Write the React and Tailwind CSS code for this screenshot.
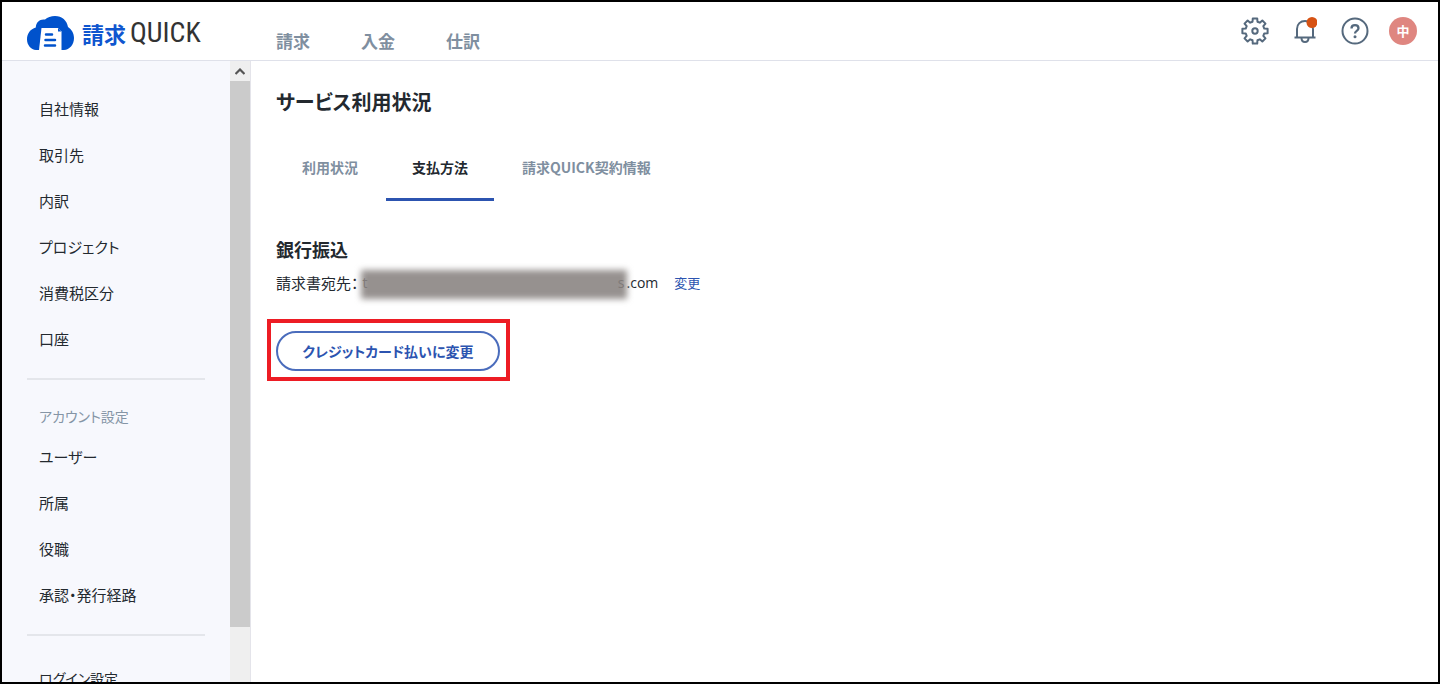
import React from 'react';

const mainNav = ['請求', '入金', '仕訳'];

const companyLinks = ['自社情報', '取引先', '内訳', 'プロジェクト', '消費税区分', '口座'];
const accountLinks = ['ユーザー', '所属', '役職', '承認・発行経路'];

const tabs = [
  { label: '利用状況', active: false },
  { label: '支払方法', active: true },
  { label: '請求QUICK契約情報', active: false },
];

// Outline of the cog: eight teeth, four points each
const cogPoints = Array.from({ length: 8 }, (_, i) =>
  [
    [-15, 9.6],
    [-10, 12.8],
    [10, 12.8],
    [15, 9.6],
  ]
    .map(([offset, radius]) => {
      const angle = ((i * 45 + offset) * Math.PI) / 180;
      return `${(14 + radius * Math.sin(angle)).toFixed(2)},${(14 - radius * Math.cos(angle)).toFixed(2)}`;
    })
    .join(' ')
).join(' ');

const Logo = () => (
  <a href="#" className="flex items-center gap-2 w-[249px] pl-[25px] pt-1 shrink-0">
    <svg width="47" height="34" viewBox="0 0 47 34" aria-hidden="true">
      <path
        d="M12 34H9C4 33.500 0 29 0 23.500C0 17.500 3.500 13 8.800 11.500C9 6 13 2.800 18 3.600C20.500 1.200 24 0 28 0C35 0 40 4.500 41 11C44.500 13.200 47 17 47 22C47 29 42.500 33.500 37 34Z"
        fill="#0052cc"
      />
      <path d="M14.500 12H31L34.500 15.500V34H12Z" fill="#fff" />
      <path d="M31 12V15.500H34.500" fill="#0052cc" />
      <path d="M19 18.500H25M18.500 24H28M18 29.500H28" stroke="#0052cc" strokeWidth="2.500" strokeLinecap="round" />
    </svg>
    <span className="flex items-center gap-1 leading-8">
      <span className="text-[22px] font-bold text-[#0f56cf]">請求</span>
      <span className="text-[28px] text-[#333] font-['Liberation_Sans_Narrow','Roboto_Condensed','Noto_Sans_CJK_JP',sans-serif]">QUICK</span>
    </span>
  </a>
);

const GearIcon = () => (
  <svg width="28" height="28" viewBox="0 0 28 28" fill="none" stroke="#55697d" strokeWidth="2" strokeLinejoin="round" aria-hidden="true">
    <polygon points={cogPoints} />
    <circle cx="14" cy="14" r="2.700" />
  </svg>
);

const BellIcon = () => (
  <svg width="24" height="28" viewBox="0 0 24 28" fill="none" stroke="#55697d" strokeWidth="2" aria-hidden="true">
    <path d="M4 20.500V12C4 7 7.500 4 12 4C16.500 4 20 7 20 12V20.500M1.500 20.500H22.500" />
    <path d="M8.500 21C8.500 23.500 10 25 12 25C14 25 15.500 23.500 15.500 21" />
    <circle cx="19" cy="5.500" r="5.500" fill="#d65213" stroke="none" />
  </svg>
);

const HelpIcon = () => (
  <svg width="28" height="28" viewBox="0 0 28 28" fill="none" stroke="#55697d" strokeWidth="2" aria-hidden="true">
    <circle cx="14" cy="14" r="12.500" />
    <path d="M10.500 11.500C10.500 9.300 12 8.200 14 8.200C16 8.200 17.500 9.400 17.500 11.300C17.500 14 14 13.800 14 16.500" strokeWidth="2.300" />
    <circle cx="14" cy="19.800" r="1.500" fill="#55697d" stroke="none" />
  </svg>
);

const SideLinks = ({ items }) => (
  <ul>
    {items.map((item) => (
      <li key={item}>
        <a href="#" className="block h-[46px] pl-[37px] leading-[46px]">
          {item}
        </a>
      </li>
    ))}
  </ul>
);

const Sidebar = () => (
  <aside className="flex w-[249px] shrink-0 overflow-hidden border-r border-[#e4e4ea] bg-[#f7f8fd]">
    <nav aria-label="設定" className="flex-1 pt-[25px]">
      <SideLinks items={companyLinks} />
      <hr className="mx-[25px] mt-4 border-t-2 border-[#e4e6eb]" />
      <h2 className="mt-6 h-6 pl-[37px] text-[14px] leading-6 text-[#8595a6]">アカウント設定</h2>
      <div className="mt-[6px]">
        <SideLinks items={accountLinks} />
      </div>
      <hr className="mx-[25px] mt-4 border-t-2 border-[#e4e6eb]" />
      <h2 className="mt-[30px] h-6 pl-[37px] text-[14px] leading-6">ログイン設定</h2>
    </nav>
    <div aria-hidden="true" className="flex w-5 shrink-0 flex-col bg-[#efefef]">
      <div className="flex h-5 items-center justify-center">
        <svg width="10" height="7" viewBox="0 0 10 7" fill="none" stroke="#555" strokeWidth="2.200">
          <path d="M0.500 6L5 1.500L9.500 6" />
        </svg>
      </div>
      <div className="h-[88%] bg-[#cbcbcb]" />
    </div>
  </aside>
);

const Header = () => (
  <header className="flex h-[59px] shrink-0 items-center border-b border-[#dfe1ea] bg-white">
    <Logo />
    <nav aria-label="メイン" className="flex gap-[51px] pl-[25px] pt-5">
      {mainNav.map((item) => (
        <a key={item} href="#" className="text-[17px] font-bold leading-6 text-[#7f8fa0]">
          {item}
        </a>
      ))}
    </nav>
    <div className="ml-auto flex items-center gap-5 pr-[21px]">
      <button type="button" aria-label="設定" className="flex w-7 justify-center">
        <GearIcon />
      </button>
      <button type="button" aria-label="通知" className="flex w-8 justify-center">
        <BellIcon />
      </button>
      <button type="button" aria-label="ヘルプ" className="flex w-7 justify-center">
        <HelpIcon />
      </button>
      <button type="button" className="h-7 w-7 rounded-full bg-[#df8680] text-[13px] font-bold leading-7 text-white">
        中
      </button>
    </div>
  </header>
);

const App = () => (
  <div className="flex h-screen flex-col overflow-hidden border-2 border-black bg-white text-[15px] text-[#23292f] [font-feature-settings:'palt'] font-['Noto_Sans_CJK_JP',sans-serif]">
    <Header />
    <div className="flex min-h-0 flex-1">
      <Sidebar />
      <main className="min-w-0 flex-1 px-[25px] pt-[25px]">
        <h1 className="text-[20px] font-bold leading-8">サービス利用状況</h1>

        <div role="tablist" className="mt-[30px] flex gap-0.5 text-[14px]">
          {tabs.map((tab) => (
            <button
              key={tab.label}
              type="button"
              role="tab"
              aria-selected={tab.active}
              className={
                tab.active
                  ? 'h-[53px] border-b-3 border-[#2c54b0] px-[26px] pb-3 font-bold text-[#23292f]'
                  : 'h-[53px] border-b-3 border-transparent px-[26px] pb-3 font-bold text-[#7f8fa0]'
              }
            >
              {tab.label}
            </button>
          ))}
        </div>

        <section className="mt-9">
          <h2 className="text-[18px] font-bold leading-6">銀行振込</h2>
          <div className="mt-[9px] flex items-start leading-[26px]">
            <span>請求書宛先：</span>
            {/* Masked mail address, only the domain ending stays readable */}
            <span className="relative ml-0.5 flex h-[29px] w-[266px] justify-between px-0.5 font-['Open_Sans',sans-serif] text-[14px] text-[#7f7a78]">
              <span className="absolute inset-0 bg-[#96918f] blur-[3px]" />
              <span className="relative">t</span>
              <span className="relative">s</span>
            </span>
            <span className="font-['Open_Sans',sans-serif] text-[14px]">.com</span>
            <a href="#" className="ml-4 text-[13px] text-[#2c54b0]">
              変更
            </a>
          </div>

          <div className="relative mt-8 inline-block">
            <button
              type="button"
              className="h-10 w-56 rounded-full border-2 border-[#4a6cbc] bg-white text-[14px] font-bold text-[#2c54b0]"
            >
              クレジットカード払いに変更
            </button>
            <span
              aria-hidden="true"
              className="pointer-events-none absolute -top-3 -right-[10px] -bottom-[10px] -left-[9px] border-4 border-[#ed1c24]"
            />
          </div>
        </section>
      </main>
    </div>
  </div>
);

export default App;
